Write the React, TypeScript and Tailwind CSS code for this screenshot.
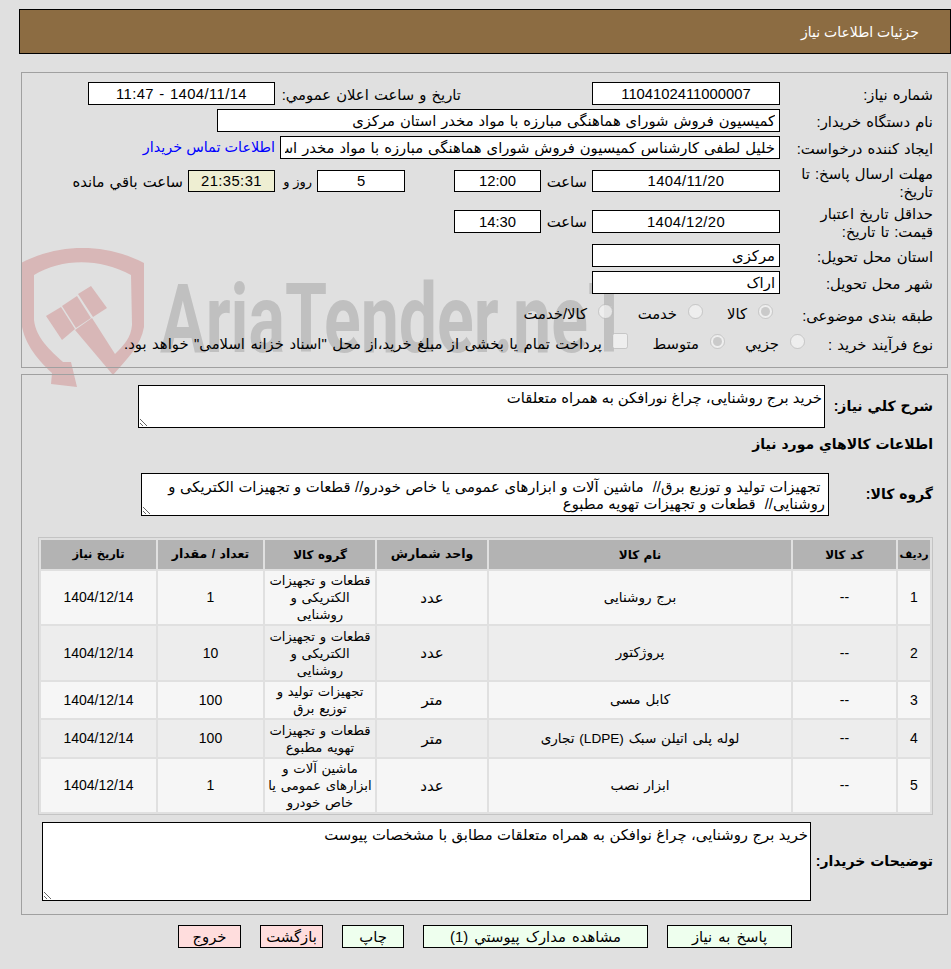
const font = "font-['Liberation_Sans','DejaVu_Sans',sans-serif]";

function Field({ value, w, center, tint, wide }: { value: string; w: string; center?: boolean; tint?: boolean; wide?: boolean }) {
  return (
    <input
      readOnly
      value={value}
      dir="rtl"
      className={`h-full border border-black px-1 text-[14.8px] text-black outline-none [word-spacing:0.8px] ${w} ${center ? "text-center" : "text-right"} ${tint ? "bg-[#eeeed2]" : "bg-white"} ${wide ? "tracking-[0.4px]" : ""}`}
    />
  );
}

function Label({ children }: { children: React.ReactNode }) {
  return <div className="w-[153px] shrink-0 pt-[3px] leading-[18px]">{children}</div>;
}

function Radio({ checked }: { checked?: boolean }) {
  return <input type="radio" disabled defaultChecked={checked} className="m-0 mb-[5px] h-[15px] w-[15px] shrink-0" />;
}

const columns = [
  { w: "w-[32px]", t: "ردیف", size: "text-[11px]" },
  { w: "w-[103px]", t: "کد کالا", size: "text-[12px]" },
  { w: "w-[302px]", t: "نام کالا", size: "text-[12px]" },
  { w: "w-[110px]", t: "واحد شمارش", size: "text-[12.5px]" },
  { w: "w-[110px]", t: "گروه کالا", size: "text-[12px]" },
  { w: "w-[105px]", t: "تعداد / مقدار", size: "text-[12.5px]" },
  { w: "w-[115px]", t: "تاریخ نیاز", size: "text-[11.5px]" },
];

const rows = [
  { h: "h-[53px]", n: "1", name: "برج روشنایی", unit: "عدد", group: ["قطعات و تجهیزات", "الکتریکی و", "روشنایی"], qty: "1" },
  { h: "h-[54px]", n: "2", name: "پروژکتور", unit: "عدد", group: ["قطعات و تجهیزات", "الکتریکی و", "روشنایی"], qty: "10" },
  { h: "h-[36px]", n: "3", name: "کابل مسی", unit: "متر", group: ["تجهیزات تولید و", "توزیع برق"], qty: "100" },
  { h: "h-[37px]", n: "4", name: "لوله پلی اتیلن سبک (LDPE) تجاری", unit: "متر", group: ["قطعات و تجهیزات", "تهویه مطبوع"], qty: "100" },
  { h: "h-[53px]", n: "5", name: "ابزار نصب", unit: "عدد", group: ["ماشین آلات و", "ابزارهای عمومی یا", "خاص خودرو"], qty: "1" },
];

const buttons = [
  { w: "w-[125px]", t: "پاسخ به نیاز", red: false },
  { w: "w-[225px]", t: "مشاهده مدارک پیوستي (1)", red: false },
  { w: "w-[62px]", t: "چاپ", red: false },
  { w: "w-[63px]", t: "بازگشت", red: true },
  { w: "w-[63px]", t: "خروج", red: true },
];

function Watermark() {
  return (
    <svg className="pointer-events-none absolute left-0 top-0 -z-10" width="951" height="400" viewBox="0 0 951 400">
      <g fill="#d8b7b7">
        <path
          fillRule="evenodd"
          d="M21 263 C60 243 105 243 144 263 L144 327 C141 345 128 358 113 375 L75 330 L92 318 L115 354 C124 345 131 338 132 325 L131 275 C100 258 62 258 34 275 L34 320 C36 338 50 350 63 362 L71 362 L77 387 L51 384 L52 373 C36 358 23 342 21 320 Z"
        />
        <polygon points="46,316 61,307 75,329 62,340" />
        <polygon points="62,306 77,296 91,318 76,328" />
        <polygon points="78,294 91,286 107,308 93,317" />
      </g>
      <text
        x="160"
        y="352"
        fill="#c0c0c0"
        fontFamily="Roboto, sans-serif"
        fontWeight="700"
        fontSize="96"
        textLength="470"
        lengthAdjust="spacingAndGlyphs"
        direction="ltr"
      >
        AriaTender.neT
      </text>
    </svg>
  );
}

export default function App() {
  return (
    <div dir="rtl" className={`relative isolate h-[969px] w-[951px] overflow-hidden bg-[#e0e0e0] text-[14.8px] text-black [word-spacing:1px] ${font}`}>
      <Watermark />

      {/* header */}
      <div className="absolute left-[19px] top-[9px] flex h-[45px] w-[932px] items-center border border-black bg-[#8c6c42] pr-[31px] pt-[2px] text-[14px] text-white [word-spacing:0px]">
        جزئیات اطلاعات نیاز
      </div>

      <div className="px-[3px] pt-[72px]">
        {/* panel 1 */}
        <div className="flex h-[296px] w-[927px] flex-col border border-[#a0a0a0] pr-[14px] pt-[9px]">
          <div className="flex h-[23px] items-center">
            <Label>شماره نیاز:</Label>
            <Field w="w-[188px]" center value="1104102411000007" />
            <div className="mr-[131px] w-[186px] whitespace-nowrap pt-[3px]">تاریخ و ساعت اعلان عمومي:</div>
            <Field w="w-[187px]" center wide value="1404/11/14 - 11:47" />
          </div>
          <div className="mt-[4px] flex h-[23px] items-center">
            <Label>نام دستگاه خریدار:</Label>
            <Field w="w-[563px]" value="کمیسیون فروش شورای هماهنگی مبارزه با مواد مخدر استان مرکزی" />
          </div>
          <div className="mt-[4px] flex h-[23px] items-center">
            <Label>ایجاد کننده درخواست:</Label>
            <Field w="w-[500px]" value="خلیل لطفی کارشناس کمیسیون فروش شورای هماهنگی مبارزه با مواد مخدر استان مرکزی" />
            <a className="mr-[5px] whitespace-nowrap pt-[1px] text-[14.4px] text-[#0000ff] [word-spacing:0px]">اطلاعات تماس خریدار</a>
          </div>
          <div className="mt-[11px] flex h-[22px] items-center">
            <Label>مهلت ارسال پاسخ: تا تاریخ:</Label>
            <Field w="w-[188px]" center wide value="1404/11/20" />
            <div className="w-[51px] pr-[5px] pt-[2px]">ساعت</div>
            <Field w="w-[87px]" center value="12:00" />
            <div className="w-[49px]" />
            <Field w="w-[88px]" center value="5" />
            <div className="w-[42px] whitespace-nowrap pr-[5px] pt-[2px] text-[13px] [word-spacing:0px]">روز و</div>
            <Field w="w-[87px]" center tint wide value="21:35:31" />
            <div className="mr-[5px] whitespace-nowrap pt-[2px]">ساعت باقي مانده</div>
          </div>
          <div className="mt-[18px] flex h-[23px] items-center">
            <Label>حداقل تاریخ اعتبار قیمت: تا تاریخ:</Label>
            <Field w="w-[188px]" center wide value="1404/12/20" />
            <div className="w-[51px] pr-[5px] pt-[2px]">ساعت</div>
            <Field w="w-[87px]" center value="14:30" />
          </div>
          <div className="mt-[11px] flex h-[23px] items-center">
            <Label>استان محل تحویل:</Label>
            <Field w="w-[188px]" value="مرکزی" />
          </div>
          <div className="mt-[4px] flex h-[23px] items-center">
            <Label>شهر محل تحویل:</Label>
            <Field w="w-[188px]" value="اراک" />
          </div>
          <div className="mt-[8px] flex h-[24px] items-center">
            <Label>طبقه بندی موضوعی:</Label>
            <div className="flex w-[22px] justify-end"><Radio checked /></div>
            <div className="w-[55px] pr-[11px]">کالا</div>
            <Radio />
            <div className="w-[75px] pr-[11px]">خدمت</div>
            <Radio />
            <div className="pr-[11px]">کالا/خدمت</div>
          </div>
          <div className="mt-[6px] flex h-[24px] items-center">
            <div className="w-[128px] shrink-0 pt-[3px]">نوع فرآیند خرید :</div>
            <Radio />
            <div className="w-[65px] pr-[11px]">جزیي</div>
            <Radio checked />
            <div className="w-[82px] pr-[11px]">متوسط</div>
            <input type="checkbox" disabled className="m-0 mb-[7px] h-[16px] w-[16px] shrink-0" />
            <div className="whitespace-nowrap pr-[10px] [word-spacing:1.4px]">پرداخت تمام یا بخشی از مبلغ خرید،از محل "اسناد خزانه اسلامی" خواهد بود.</div>
          </div>
        </div>
      </div>

      <div className="px-[3px] pt-[6px]">
        {/* panel 2 */}
        <div className="h-[541px] w-[927px] border border-[#a0a0a0] pr-[14px] pt-[10px]">
          <div className="flex h-[43px] items-center">
            <div className="w-[108px] shrink-0 text-[14px] font-bold">شرح کلي نیاز:</div>
            <textarea
              readOnly
              dir="rtl"
              value="خرید برج روشنایی، چراغ نورافکن به همراه متعلقات"
              className="h-[43px] w-[687px] border border-black bg-white px-[2px] pt-[4px] leading-[17px] outline-none"
            />
          </div>
          <div className="mt-[6px] h-[20px] text-[14px] font-bold leading-[20px]">اطلاعات کالاهاي مورد نیاز</div>
          <div className="mt-[19px] flex h-[43px] items-center">
            <div className="w-[104px] shrink-0 text-[14px] font-bold">گروه کالا:</div>
            <textarea
              readOnly
              dir="rtl"
              value=" تجهیزات تولید و توزیع برق//  ماشین آلات و ابزارهای عمومی یا خاص خودرو// قطعات و تجهیزات الکتریکی و روشنایی//  قطعات و تجهیزات تهویه مطبوع"
              className="h-[43px] w-[688px] overflow-hidden border border-black bg-white px-[3px] pt-[5px] leading-[17px] outline-none [word-spacing:0.4px]"
            />
          </div>

          <table className="mt-[21px] w-[895px] table-fixed border-separate border-spacing-[2px] border border-[#c4c4c4] bg-[#e0e0e0] text-[14px]">
            <thead>
              <tr className="h-[29px]">
                {columns.map((c) => (
                  <th key={c.t} className={`${c.w} ${c.size} bg-[#b3b3b3] p-0 text-center font-bold`}>{c.t}</th>
                ))}
              </tr>
            </thead>
            <tbody>
              {rows.map((r, i) => {
                const bg = i % 2 === 0 ? "bg-[#f6f6f6]" : "bg-[#ededed]";
                return (
                  <tr key={r.n} className={r.h}>
                    <td className={`${bg} p-0 text-center`}>{r.n}</td>
                    <td className={`${bg} p-0 text-center`}>--</td>
                    <td className={`${bg} p-0 pt-[1px] text-center text-[13.6px]`}>{r.name}</td>
                    <td className={`${bg} p-0 pt-[1px] text-center text-[15px]`}>{r.unit}</td>
                    <td className={`${bg} p-0 text-center text-[13.2px] leading-[17px]`}>
                      {r.group.map((line) => (
                        <div key={line} className="whitespace-nowrap">{line}</div>
                      ))}
                    </td>
                    <td className={`${bg} p-0 text-center`}>{r.qty}</td>
                    <td className={`${bg} p-0 text-center`}>1404/12/14</td>
                  </tr>
                );
              })}
            </tbody>
          </table>

          <div className="mt-[7px] flex h-[79px] items-center">
            <div className="w-[122px] shrink-0 text-[14px] font-bold">توضیحات خریدار:</div>
            <textarea
              readOnly
              dir="rtl"
              value="خرید برج روشنایی، چراغ نوافکن به همراه متعلقات مطابق با مشخصات پیوست"
              className="h-[79px] w-[769px] border border-black bg-white px-[2px] pt-[4px] leading-[17px] outline-none [word-spacing:0.4px]"
            />
          </div>
        </div>
      </div>

      {/* actions */}
      <div className="mr-[159px] mt-[10px] flex h-[23px] gap-[19px]">
        {buttons.map((b) => (
          <button
            key={b.t}
            className={`${b.w} border border-black whitespace-nowrap [word-spacing:2px] ${b.red ? "bg-[#ffdddd]" : "bg-[#eeffee]"}`}
          >
            {b.t}
          </button>
        ))}
      </div>
    </div>
  );
}
